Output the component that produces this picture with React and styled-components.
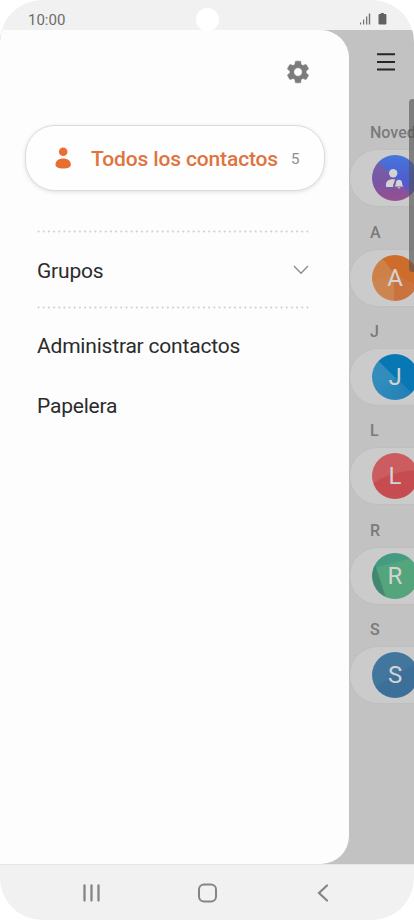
import React from 'react';
import styled, { createGlobalStyle } from 'styled-components';


const GlobalStyle = createGlobalStyle`
  body {
    margin: 0;
    background: #ffffff;
    font-family: Roboto, 'Liberation Sans', sans-serif;
  }
  * {
    box-sizing: border-box;
  }
  svg {
    display: block;
  }
`

const Phone = styled.div`
  display: flex;
  flex-direction: column;
  width: 414px;
  height: 920px;
  overflow: hidden;
  border-radius: 42px;
  background: #f1f1f1;
`
const StatusBar = styled.header`
  display: grid;
  grid-template-columns: 1fr 24px 1fr;
  flex: none;
  height: 30px;
  padding: 0 27px 0 28px;
`
const Clock = styled.span`
  padding-top: 11px;
  font-size: 15px;
  line-height: 19px;
  color: #6c6c6c;
`
const Camera = styled.span`
  width: 23px;
  height: 23px;
  margin-top: 8px;
  border-radius: 50%;
  background: #ffffff;
`
const StatusIcons = styled.div`
  display: flex;
  justify-content: flex-end;
  gap: 7px;
  padding-top: 12px;
`
const Content = styled.main`
  display: flex;
  flex: none;
  height: 834px;
  background: #c2c2c2;
`
const Drawer = styled.aside`
  flex: none;
  width: 349px;
  border-radius: 0 28px 28px 0;
  background: #fdfdfd;
`
const DrawerTop = styled.div`
  display: flex;
  justify-content: flex-end;
  height: 95px;
  padding: 29px 38px 0 0;
`
const AllContacts = styled.div`
  display: flex;
  align-items: center;
  width: 300px;
  height: 66px;
  margin-left: 24.5px;
  padding: 0 24px 0 28.5px;
  border: 1px solid #dcdcdc;
  border-radius: 30px;
  background: #fefefe;
  box-shadow: 0 1px 4px rgba(0, 0, 0, 0.12);
`
const AllLabel = styled.span`
  margin-left: 19px;
  padding-top: 2px;
  font-size: 21px;
  font-weight: 500;
  letter-spacing: -0.14px;
  white-space: nowrap;
  color: #df7440;
`
const Count = styled.span`
  margin-left: auto;
  padding-top: 2px;
  font-size: 15px;
  color: #8e8e8e;
`
const Menu = styled.nav`
  padding: 39px 40px 0 37px;
`
const Dots = styled.svg`
  width: 273px;
  height: 3px;
`
const MenuItem = styled.div`
  display: flex;
  align-items: center;
  justify-content: space-between;
  height: ${props => props.$tall ? '73px' : '60px'};
  padding: ${props => props.$tall ? '2px 0 0 0' : '3px 0 0 0'};
  font-size: 21px;
  letter-spacing: -0.2px;
  color: #2b2b2b;
`
const MenuGroup = styled.div`
  padding-top: 5.5px;
`
const Page = styled.section`
  position: relative;
  flex: 1;
  min-width: 0;
  overflow: hidden;
`
const PageTop = styled.div`
  height: 92.4px;
  padding: 22px 0 0 28px;
`
const Scrollbar = styled.div`
  position: absolute;
  top: 69px;
  right: -2px;
  width: 7px;
  height: 173px;
  border-radius: 4px;
  background: rgba(80, 80, 80, 0.6);
`
const Group = styled.div`
  height: 99.3px;
`
const GroupTitle = styled.h2`
  height: 27px;
  margin: 0;
  padding-left: 21px;
  font-size: 16px;
  font-weight: 500;
  line-height: 21px;
  color: #7a7a7a;
`
const Card = styled.div`
  display: flex;
  align-items: center;
  width: 200px;
  height: 58px;
  padding-left: 22px;
  border: 1px solid #bebebe;
  border-radius: 29px;
  background: #cbcbcb;
`
const Avatar = styled.div`
  display: grid;
  place-items: center;
  width: 46px;
  height: 46px;
  padding-top: 1px;
  border-radius: 50%;
  background: ${props => props.$fill};
  font-size: 24px;
  line-height: 45px;
  color: #d3d3d3;
`
const NavBar = styled.footer`
  display: flex;
  align-items: center;
  justify-content: space-between;
  flex: 1;
  padding: 0 84px 0 82px;
  border-top: 1px solid #e6e6e6;
`

const Divider = () => (
  <Dots viewBox="0 0 273 3">
    <path d="M1.5 1.5H272" stroke="#cfcfcf" strokeWidth="2" strokeLinecap="round" strokeDasharray="0.1 5.07" />
  </Dots>
);

const NewsIcon = () => (
  <svg width="20" height="22" viewBox="0 0 20 22" fill="#d3d3d3">
    <circle cx="8.2" cy="5.2" r="4.2" />
    <path d="M1 19v-2.500C1 13 4 11.200 8 11.200c.9 0 1.600.1 2.300.3-1.200 1.500-.9 3.500-2.200 5.200V19z" />
    <path d="M9.500 18.500c1.300-1.200 1.200-2 1.400-3.700.2-2 1.400-3.100 3.100-3.100s2.900 1.100 3.100 3.100c.2 1.700.1 2.500 1.400 3.700z" />
    <path d="M12.500 19.200h3c-.2.8-.8 1.200-1.500 1.200s-1.300-.4-1.500-1.200z" />
  </svg>
);

const groups = [
  { title: 'Novedades', fill: 'linear-gradient(45deg, rgba(170, 80, 110, 0.45) 50%, transparent 50%), linear-gradient(#4676da, #4f5bd0 60%, #8a4ea8)' },
  { title: 'A', fill: 'conic-gradient(from 0deg at 48% 40%, #ce6c2c 0deg 118deg, #cb733f 118deg 180deg, #cd8550 180deg 250deg, #cd8048 250deg 322deg, #ce6c2c 322deg)' },
  { title: 'J', fill: 'conic-gradient(from 0deg at 50% 50%, #0878b5 0deg 135deg, #2380b7 135deg, #328dbc 260deg 315deg, #0878b5 315deg)' },
  { title: 'L', fill: 'radial-gradient(ellipse 62px 42px at 100% 128%, #c74c51 98%, #cb5c60 100%)' },
  { title: 'R', fill: 'linear-gradient(72deg, #408871 22%, transparent 25%), linear-gradient(165deg, #439b81 25%, #54a47c 28%)' },
  { title: 'S', fill: 'linear-gradient(150deg, #42769d 50%, #3d7099 51%)' },
];

const App = () => (
  <>
    <GlobalStyle />
    <Phone>
      <StatusBar>
        <Clock>10:00</Clock>
        <Camera />
        <StatusIcons>
          <svg width="12" height="13" viewBox="0 0 12 13" fill="#737373">
            <path d="M1 10.500h1.200v2H1zM4 7.500h1.200v5H4zM7 4.500h1.300v8H7zM9.800 1.500H11.200v11H9.800z" />
          </svg>
          <svg width="9" height="13" viewBox="0 0 9 13" fill="#626262">
            <path d="M2.800 1h3v1H7.400q1 0 1 1v8.500q0 1-1 1H1.500q-1 0-1-1V3q0-1 1-1h1.300z" />
          </svg>
        </StatusIcons>
      </StatusBar>
      <Content>
        <Drawer>
          <DrawerTop>
            <svg width="26" height="26" viewBox="0 0 24 24" fill="#7c7c7c" stroke="#7c7c7c" strokeWidth="0.5">
              <path d="M19.430 12.980c.04-.32.070-.64.070-.98s-.03-.66-.07-.98l2.110-1.650c.19-.15.240-.42.120-.64l-2-3.460c-.12-.22-.39-.3-.61-.22l-2.490 1c-.52-.4-1.080-.73-1.690-.98l-.38-2.650A.488.488 0 0 0 14 2h-4c-.25 0-.46.180-.49.420l-.38 2.650c-.61.250-1.170.590-1.690.980l-2.490-1c-.23-.09-.49 0-.61.220l-2 3.460c-.13.220-.07.490.120.640l2.110 1.650c-.04.320-.07.650-.07.980s.03.660.070.980l-2.110 1.650c-.19.150-.24.420-.12.640l2 3.460c.12.220.39.300.61.220l2.490-1c.52.400 1.080.730 1.690.980l.38 2.650c.03.240.24.420.49.420h4c.25 0 .46-.18.490-.42l.38-2.650c.61-.25 1.170-.59 1.690-.98l2.490 1c.23.090.49 0 .61-.22l2-3.460c.12-.22.070-.49-.12-.64zM12 15.900a3.900 3.900 0 1 1 0-7.800 3.900 3.900 0 0 1 0 7.800z" />
            </svg>
          </DrawerTop>
          <AllContacts>
            <svg width="18" height="24" viewBox="0 0 18 24" fill="#e96f31">
              <circle cx="9.200" cy="5.800" r="4.300" />
              <path d="M1.500 18.300C1.800 14.600 5 12.500 9.200 12.500s7.400 2.100 7.700 5.800c.2 3-3.200 4.300-7.700 4.300s-7.900-1.300-7.700-4.300z" />
            </svg>
            <AllLabel>Todos los contactos</AllLabel>
            <Count>5</Count>
          </AllContacts>
          <Menu>
            <Divider />
            <MenuItem $tall>
              Grupos
              <svg width="16" height="12" viewBox="0 0 16 12" fill="none" stroke="#8c8c8c" strokeWidth="1.400">
                <path d="M1 1l7 7.200L15 1" />
              </svg>
            </MenuItem>
            <Divider />
            <MenuGroup>
              <MenuItem>Administrar contactos</MenuItem>
              <MenuItem>Papelera</MenuItem>
            </MenuGroup>
          </Menu>
        </Drawer>
        <Page>
          <PageTop>
            <svg width="18" height="19" viewBox="0 0 18 19" stroke="#262626" strokeWidth="2">
              <path d="M0 2.200h18M0 9.900h18M0 17.500h18" />
            </svg>
          </PageTop>
          {groups.map(group => (
            <Group key={group.title}>
              <GroupTitle>{group.title}</GroupTitle>
              <Card>
                <Avatar $fill={group.fill}>
                  {group.title.length > 1 ? <NewsIcon /> : group.title}
                </Avatar>
              </Card>
            </Group>
          ))}
          <Scrollbar />
        </Page>
      </Content>
      <NavBar>
        <svg width="19" height="18" viewBox="0 0 19 18" stroke="#858585" strokeWidth="2.300" strokeLinecap="round">
          <path d="M2.500 1.500v15M9.500 1.500v15M16.500 1.500v15" />
        </svg>
        <svg width="24" height="20" viewBox="0 0 24 20" fill="none" stroke="#858585" strokeWidth="2">
          <rect x="2" y="1.500" width="17" height="17" rx="5" />
        </svg>
        <svg width="14" height="18" viewBox="0 0 14 18" fill="none" stroke="#858585" strokeWidth="2.200" strokeLinecap="round">
          <path d="M11 1.500L3 9l8 7.500" />
        </svg>
      </NavBar>
    </Phone>
  </>
);

export default App;
